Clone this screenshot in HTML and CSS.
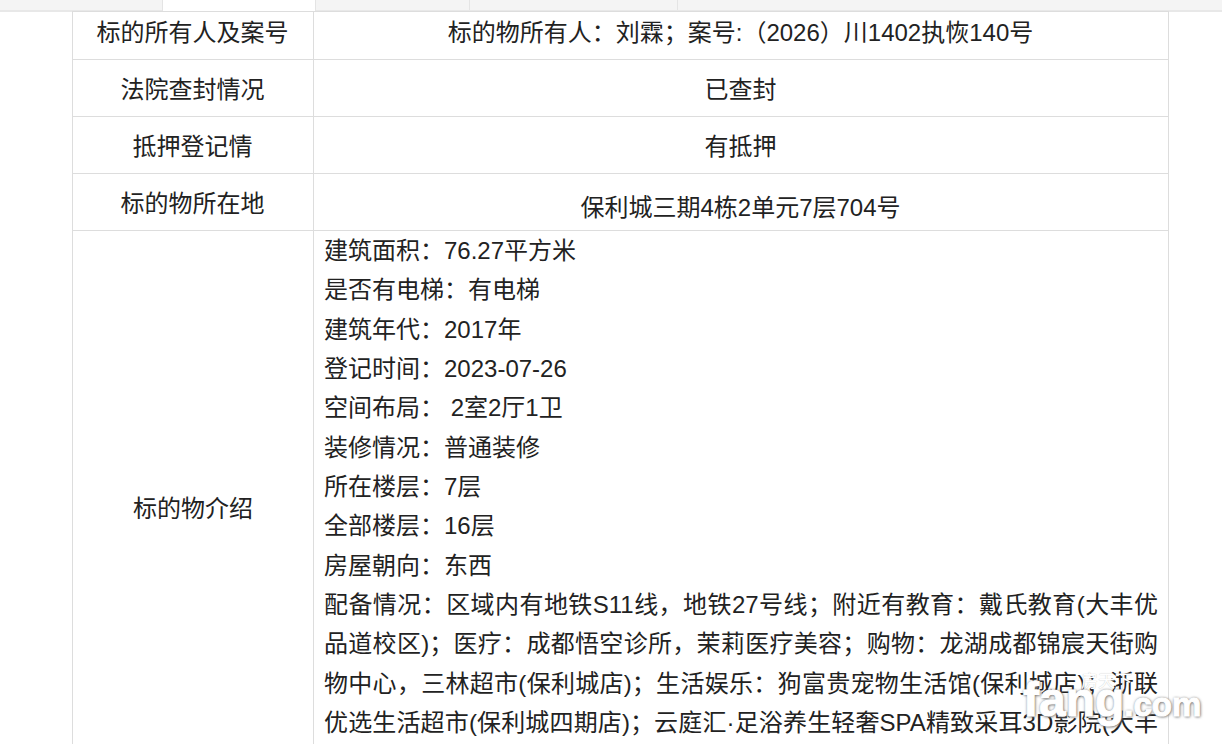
FILE: index.html
```html
<!DOCTYPE html>
<html lang="zh-CN">
<head>
<meta charset="utf-8">
<title>标的物详情</title>
<link rel="stylesheet" href="styles.css">
</head>
<body>
<div class="tabs">
  <div class="tab tab-active"></div>
  <div class="tab"></div>
  <div class="tab tab-wide"></div>
</div>
<table class="info">
  <colgroup><col class="col-label"><col class="col-value"></colgroup>
  <tbody>
    <tr class="row row-first"><td>标的所有人及案号</td><td>标的物所有人：刘霖；案号:（2026）川1402执恢140号</td></tr>
    <tr class="row"><td>法院查封情况</td><td>已查封</td></tr>
    <tr class="row"><td>抵押登记情</td><td>有抵押</td></tr>
    <tr class="row"><td>标的物所在地</td><td class="low">保利城三期4栋2单元7层704号</td></tr>
    <tr>
      <td>标的物介绍</td>
      <td class="desc">
        <p>建筑面积：76.27平方米</p>
        <p>是否有电梯：有电梯</p>
        <p>建筑年代：2017年</p>
        <p>登记时间：2023-07-26</p>
        <p>空间布局： 2室2厅1卫</p>
        <p>装修情况：普通装修</p>
        <p>所在楼层：7层</p>
        <p>全部楼层：16层</p>
        <p>房屋朝向：东西</p>
        <p>配备情况：区域内有地铁S11线，地铁27号线；附近有教育：戴氏教育(大丰优品道校区)；医疗：成都悟空诊所，茉莉医疗美容；购物：龙湖成都锦宸天街购物中心，三林超市(保利城店)；生活娱乐：狗富贵宠物生活馆(保利城店)；浙联优选生活超市(保利城四期店)；云庭汇·足浴养生轻奢SPA精致采耳3D影院(大丰店)；</p>
      </td>
    </tr>
  </tbody>
</table>
<div class="mark"><span class="mark-cn">房天下</span><span class="mark-en">fang<span class="mark-dot">.com</span></span></div>
</body>
</html>
```
FILE: styles.css
```css
html, body {
  margin: 0;
  height: 744px;
  overflow: hidden;
  background: #fff;
}
body {
  position: relative;
  font-family: "Liberation Sans", "Noto Sans CJK SC", sans-serif;
  font-size: 24px;
  color: #222;
}
.tabs {
  display: flex;
  height: 10px;
  padding-left: 162px;
  background: #f4f4f4;
  border-bottom: 2px solid #e8e8e8;
}
.tab {
  width: 154px;
  height: 10px;
  border-right: 1px solid #e4e4e4;
  box-sizing: border-box;
}
.tab-active {
  background: #fff;
  height: 11px;
  border-left: 1px solid #e4e4e4;
}
.tab-wide { width: 208px; }
.info {
  border-collapse: collapse;
  table-layout: fixed;
  width: 1096px;
  margin-left: 72px;
  margin-top: -1px;
}
.col-label { width: 241px; }
.col-value { width: 855px; }
.info td {
  border: 1px solid #ddd;
  text-align: center;
  vertical-align: middle;
  padding: 0;
}
.row { height: 57px; }
.row-first { height: 48px; }
.row td { padding: 0 1px 2px 0; box-sizing: border-box; }
.row-first td { padding-bottom: 10px; }
.info td.low { padding: 6px 1px 0 0; }
.info td.desc {
  text-align: justify;
  padding: 0 10px;
  vertical-align: top;
}
.desc p {
  margin: 0;
  line-height: 39.33px;
}
.mark {
  position: absolute;
  left: 1023px;
  top: 668px;
  width: 190px;
  height: 64px;
  color: #fff;
  font-weight: 700;
  line-height: 1;
}
.mark-cn {
  position: absolute;
  left: 58px;
  top: 5px;
  font-size: 17px;
  font-weight: 400;
  white-space: nowrap;
  text-shadow: 0 0 1px #bbb;
}
.mark-en {
  position: absolute;
  left: 0;
  top: 8px;
  font-size: 48px;
  -webkit-text-stroke: 1px #fff;
  text-shadow: 0 0 3px #777, 1px 1px 3px #777;
  white-space: nowrap;
}
.mark-dot {
  font-size: 33px;
}
```
